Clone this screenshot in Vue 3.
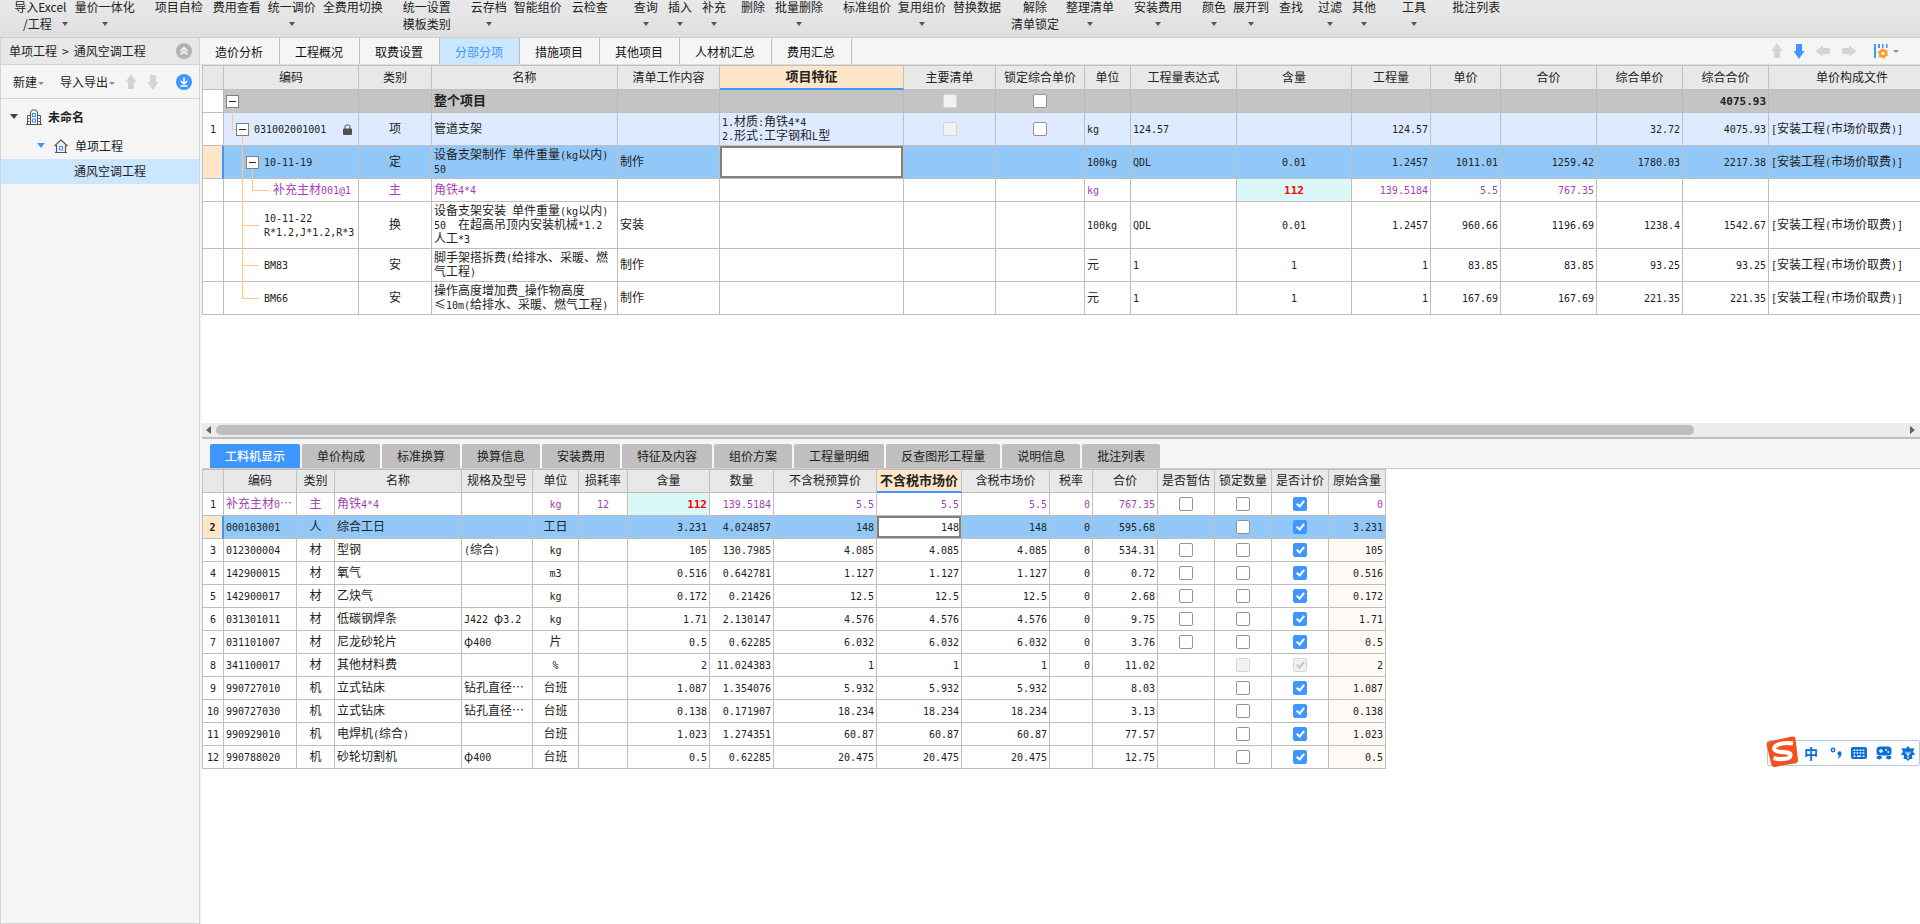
<script setup>
import { ref } from 'vue'

/* Splits a text into runs of ASCII and CJK so each gets its own face. */
const runs = (text) =>
  (String(text ?? '').match(/[\x00-\x5e\x60-\x7f]+|[^\x00-\x5e\x60-\x7f]+/g) || []).map((t) => ({
    t,
    en: /^[\x00-\x5e\x60-\x7f]/.test(t),
  }))

const commands = [
  { t: '导入Excel', sub: '/工程', drop: true, gap: 'md' },
  { t: '量价一体化', drop: true, gap: 'sm' },
  { t: '项目自检', gap: 'xl' },
  { t: '费用查看', gap: 'md' },
  { t: '统一调价', drop: true, gap: 'sm' },
  { t: '全费用切换', gap: 'sm' },
  { t: '统一设置', sub: '模板类别', gap: 'xl' },
  { t: '云存档', drop: true, gap: 'xl' },
  { t: '智能组价', gap: 'sm' },
  { t: '云检查', gap: 'md' },
  { t: '查询', drop: true, gap: 'xxl' },
  { t: '插入', drop: true, gap: 'md' },
  { t: '补充', drop: true, gap: 'md' },
  { t: '删除', gap: 'lg' },
  { t: '批量删除', drop: true, gap: 'md' },
  { t: '标准组价', gap: 'xl' },
  { t: '复用组价', drop: true, gap: 'sm' },
  { t: '替换数据', gap: 'sm' },
  { t: '解除', sub: '清单锁定', gap: 'md' },
  { t: '整理清单', drop: true, gap: 'sm' },
  { t: '安装费用', drop: true, gap: 'xl' },
  { t: '颜色', drop: true, gap: 'xl' },
  { t: '展开到', drop: true, gap: 'sm' },
  { t: '查找', gap: 'md' },
  { t: '过滤', drop: true, gap: 'lg' },
  { t: '其他', drop: true, gap: 'md' },
  { t: '工具', drop: true, gap: 'xxl' },
  { t: '批注列表', gap: 'xxl' },
]

const mainTabs = ['造价分析', '工程概况', '取费设置', '分部分项', '措施项目', '其他项目', '人材机汇总', '费用汇总']
const mainTab = ref('分部分项')
const detailTabs = ['工料机显示', '单价构成', '标准换算', '换算信息', '安装费用', '特征及内容', '组价方案', '工程量明细', '反查图形工程量', '说明信息', '批注列表']
const detailTab = ref('工料机显示')

const billCols = [
  { k: 'no', t: '', w: 21, a: 'c' },
  { k: 'code', t: '编码', w: 135, a: 'l' },
  { k: 'kind', t: '类别', w: 73, a: 'c' },
  { k: 'name', t: '名称', w: 186, a: 'l' },
  { k: 'work', t: '清单工作内容', w: 102, a: 'l' },
  { k: 'feat', t: '项目特征', w: 184, a: 'l' },
  { k: 'main', t: '主要清单', w: 92, a: 'c' },
  { k: 'lock', t: '锁定综合单价', w: 89, a: 'c' },
  { k: 'unit', t: '单位', w: 46, a: 'l' },
  { k: 'expr', t: '工程量表达式', w: 106, a: 'l' },
  { k: 'cont', t: '含量', w: 115, a: 'c' },
  { k: 'qty', t: '工程量', w: 79, a: 'r' },
  { k: 'price', t: '单价', w: 70, a: 'r' },
  { k: 'sum', t: '合价', w: 96, a: 'r' },
  { k: 'cprice', t: '综合单价', w: 86, a: 'r' },
  { k: 'csum', t: '综合合价', w: 86, a: 'r' },
  { k: 'file', t: '单价构成文件', w: 167, a: 'l' },
]
const fee = '[安装工程(市场价取费)]'
const billRows = [
  { cls: 'total', size: 'h1', box: 0, guides: ['v l0 low'], name: '整个项目', main: 'off', lock: 'on', csum: '4075.93' },
  { cls: 'item', size: 'h2', box: 1, guides: ['v l0 up', 'h l0', 'v l1 low'], no: '1', code: '031002001001', locked: true, kind: '项', name: '管道支架', feat: '1.材质:角铁4*4\n2.形式:工字钢和L型', main: 'off', lock: 'on', unit: 'kg', expr: '124.57', qty: '124.57', cprice: '32.72', csum: '4075.93', file: fee },
  { cls: 'current', size: 'h2', box: 2, guides: ['v l1 all', 'h l1', 'v l2 low'], code: '10-11-19', kind: '定', name: '设备支架制作 单件重量(kg以内)\n50', work: '制作', unit: '100kg', expr: 'QDL', cont: '0.01', qty: '1.2457', price: '1011.01', sum: '1259.42', cprice: '1780.03', csum: '2217.38', file: fee },
  { cls: 'extra', size: 'h1', leaf: 'deep', guides: ['v l1 all', 'v l2 up', 'h l2'], code: '补充主材001@1', kind: '主', name: '角铁4*4', unit: 'kg', cont: '112', qty: '139.5184', price: '5.5', sum: '767.35' },
  { cls: '', size: 'h3', leaf: 'leaf', guides: ['v l1 all', 'h l1'], code: '10-11-22\nR*1.2,J*1.2,R*3', kind: '换', name: '设备支架安装 单件重量(kg以内)\n50  在超高吊顶内安装机械*1.2\n人工*3', work: '安装', unit: '100kg', expr: 'QDL', cont: '0.01', qty: '1.2457', price: '960.66', sum: '1196.69', cprice: '1238.4', csum: '1542.67', file: fee },
  { cls: '', size: 'h2', leaf: 'leaf', guides: ['v l1 all', 'h l1'], code: 'BM83', kind: '安', name: '脚手架搭拆费(给排水、采暖、燃\n气工程)', work: '制作', unit: '元', expr: '1', cont: '1', qty: '1', price: '83.85', sum: '83.85', cprice: '93.25', csum: '93.25', file: fee },
  { cls: '', size: 'h2', leaf: 'leaf', guides: ['v l1 up', 'h l1'], code: 'BM66', kind: '安', name: '操作高度增加费_操作物高度\n≤10m(给排水、采暖、燃气工程)', work: '制作', unit: '元', expr: '1', cont: '1', qty: '1', price: '167.69', sum: '167.69', cprice: '221.35', csum: '221.35', file: fee },
]

const resCols = [
  { k: 'no', t: '', w: 21, a: 'c' },
  { k: 'code', t: '编码', w: 73, a: 'l' },
  { k: 'kind', t: '类别', w: 38, a: 'c' },
  { k: 'name', t: '名称', w: 127, a: 'l' },
  { k: 'spec', t: '规格及型号', w: 71, a: 'l' },
  { k: 'unit', t: '单位', w: 46, a: 'c' },
  { k: 'loss', t: '损耗率', w: 49, a: 'c' },
  { k: 'cont', t: '含量', w: 82, a: 'r' },
  { k: 'qty', t: '数量', w: 64, a: 'r' },
  { k: 'p1', t: '不含税预算价', w: 103, a: 'r' },
  { k: 'p2', t: '不含税市场价', w: 85, a: 'r' },
  { k: 'p3', t: '含税市场价', w: 88, a: 'r' },
  { k: 'tax', t: '税率', w: 43, a: 'r' },
  { k: 'sum', t: '合价', w: 65, a: 'r' },
  { k: 'est', t: '是否暂估', w: 57, a: 'c' },
  { k: 'lock', t: '锁定数量', w: 57, a: 'c' },
  { k: 'calc', t: '是否计价', w: 57, a: 'c' },
  { k: 'orig', t: '原始含量', w: 57, a: 'r' },
]
const resRows = [
  ['补充主材0…', '主', '角铁4*4', '', 'kg', '12', '112', '139.5184', '5.5', '0', '767.35', 'on', 'on', 'checked', '0'],
  ['000103001', '人', '综合工日', '', '工日', '', '3.231', '4.024857', '148', '0', '595.68', '', 'on', 'checked', '3.231'],
  ['012300004', '材', '型钢', '(综合)', 'kg', '', '105', '130.7985', '4.085', '0', '534.31', 'on', 'on', 'checked', '105'],
  ['142900015', '材', '氧气', '', 'm3', '', '0.516', '0.642781', '1.127', '0', '0.72', 'on', 'on', 'checked', '0.516'],
  ['142900017', '材', '乙炔气', '', 'kg', '', '0.172', '0.21426', '12.5', '0', '2.68', 'on', 'on', 'checked', '0.172'],
  ['031301011', '材', '低碳钢焊条', 'J422 φ3.2', 'kg', '', '1.71', '2.130147', '4.576', '0', '9.75', 'on', 'on', 'checked', '1.71'],
  ['031101007', '材', '尼龙砂轮片', 'φ400', '片', '', '0.5', '0.62285', '6.032', '0', '3.76', 'on', 'on', 'checked', '0.5'],
  ['341100017', '材', '其他材料费', '', '%', '', '2', '11.024383', '1', '0', '11.02', '', 'off', 'checked off', '2'],
  ['990727010', '机', '立式钻床', '钻孔直径…', '台班', '', '1.087', '1.354076', '5.932', '', '8.03', '', 'on', 'checked', '1.087'],
  ['990727030', '机', '立式钻床', '钻孔直径…', '台班', '', '0.138', '0.171907', '18.234', '', '3.13', '', 'on', 'checked', '0.138'],
  ['990929010', '机', '电焊机(综合)', '', '台班', '', '1.023', '1.274351', '60.87', '', '77.57', '', 'on', 'checked', '1.023'],
  ['990788020', '机', '砂轮切割机', 'φ400', '台班', '', '0.5', '0.62285', '20.475', '', '12.75', '', 'on', 'checked', '0.5'],
].map(([code, kind, name, spec, unit, loss, cont, qty, p, tax, sum, est, lock, calc, orig], i) => ({
  no: String(i + 1), code, kind, name, spec, unit, loss, cont, qty, p1: p, p2: p, p3: p, tax, sum, est, lock, calc, orig,
  cls: i === 0 ? 'extra' : i === 1 ? 'current' : '',
}))
const totalW = (cols) => cols.reduce((s, c) => s + c.w, 1) + 'px'
</script>

<template>
  <div class="app" lang="zh-CN">
    <header class="ribbon">
      <button v-for="c in commands" :key="c.t" type="button" class="cmd" :class="c.gap">
        <span class="cmd-line">{{ c.t }}</span>
        <span class="cmd-line" :class="{ both: c.sub && c.drop }"><template v-if="c.sub">{{ c.sub }}</template><i v-if="c.drop" class="caret"></i></span>
      </button>
    </header>

    <div class="body">
      <aside class="side">
        <div class="side-head">
          <span class="crumb"><span>单项工程</span><span>&gt;</span><span>通风空调工程</span></span>
          <button type="button" class="round" aria-label="收起">
            <svg width="16" height="16" viewBox="0 0 16 16"><circle cx="8" cy="8" r="8" fill="#b3b3b3" /><path d="M4.5 8 8 4.8 11.5 8M4.5 11.6 8 8.4l3.5 3.2" fill="none" stroke="#fff" stroke-width="1.6" /></svg>
          </button>
        </div>
        <div class="side-tools">
          <button type="button" class="tool">新建<i class="caret tiny"></i></button>
          <button type="button" class="tool import">导入导出<i class="caret tiny"></i></button>
          <button type="button" class="arrow" aria-label="上移"><svg width="12" height="16" viewBox="0 0 12 16"><path d="M6 0 11.5 8H9v7H3V8H.5z" fill="#d4d4d4" /></svg></button>
          <button type="button" class="arrow" aria-label="下移"><svg width="12" height="16" viewBox="0 0 12 16"><path d="M6 16 .5 8H3V1h6v7h2.5z" fill="#d4d4d4" /></svg></button>
          <button type="button" class="round" aria-label="定位">
            <svg width="16" height="16" viewBox="0 0 16 16"><circle cx="8" cy="8" r="8" fill="#4096ff" /><path d="M8 3.5v6M4.8 7 8 10l3.2-3M4.5 12h7" fill="none" stroke="#fff" stroke-width="1.5" /></svg>
          </button>
        </div>
        <nav class="tree">
          <div class="node root">
            <i class="caret big"></i>
            <svg width="16" height="16" viewBox="0 0 16 16" fill="none"><path d="M0 15.500h16M1.500 15V6.500H4M14.500 15V6.500H12M4.500 15V3L6 1h4l1.500 2V15M2 9.500h1.500M2 12.500h1.500M12.500 9.500H14M12.500 12.500H14" stroke="#555" /><path d="M6.500 4.500h3v3h-3zM6.500 10h3v3h-3z" stroke="#4096ff" stroke-width="1.200" /></svg>
            <strong>未命名</strong>
          </div>
          <div class="node child">
            <i class="caret big blue"></i>
            <svg width="14" height="14" viewBox="0 0 14 14" fill="none"><path d="M.5 7 7 1l6.500 6M2.500 6v7.500h9V6M1 13.500h12" stroke="#555" stroke-width="1.200" /><path d="M5.500 7.500h3v3.500h-3z" stroke="#4096ff" stroke-width="1.200" /></svg>
            <span>单项工程</span>
          </div>
          <div class="node grand">通风空调工程</div>
        </nav>
      </aside>

      <main class="main">
        <div class="tabs">
          <button v-for="t in mainTabs" :key="t" type="button" class="tab" :class="{ active: t === mainTab }" @click="mainTab = t">{{ t }}</button>
          <div class="tab-tools">
            <button type="button" aria-label="上移"><svg width="12" height="16" viewBox="0 0 12 16"><path d="M6 0 11.500 8H9v7H3V8H.5z" fill="#d4d4d4" /></svg></button>
            <button type="button" aria-label="下移"><svg width="12" height="16" viewBox="0 0 12 16"><path d="M6 16 .5 8H3V1h6v7h2.500z" fill="#4096ff" /></svg></button>
            <button type="button" aria-label="左移"><svg width="16" height="12" viewBox="0 0 16 12"><path d="M0 6 8 .5V3h7v6H8v2.500z" fill="#d4d4d4" /></svg></button>
            <button type="button" aria-label="右移"><svg width="16" height="12" viewBox="0 0 16 12"><path d="M16 6 8 .5V3H1v6h7v2.500z" fill="#d4d4d4" /></svg></button>
            <button type="button" class="setup" aria-label="列设置">
              <svg width="16" height="16" viewBox="0 0 16 16"><path d="M1 1h2v14H1zM5 1h2v4H5zM9 1h1.500v4H9zM13 1h1.500v4H13z" fill="#4096ff" /><circle cx="10" cy="10.500" r="3" fill="none" stroke="#ff9a1f" stroke-width="2.400" /><circle cx="10" cy="10.500" r="4.300" fill="none" stroke="#ff9a1f" stroke-width="1.500" stroke-dasharray="2.200 2.300" /></svg>
              <i class="caret tiny"></i>
            </button>
          </div>
        </div>

        <section class="bill">
          <div class="bill-grid">
            <table class="grid" :style="{ width: totalW(billCols) }">
              <colgroup><col v-for="c in billCols" :key="c.k" :style="{ width: c.w + 'px' }"></colgroup>
              <thead>
                <tr class="h0"><th v-for="c in billCols" :key="c.k" scope="col" :class="{ focus: c.k === 'feat' }">{{ c.t }}</th></tr>
              </thead>
              <tbody>
                <tr v-for="(r, i) in billRows" :key="i" :class="[r.cls, r.size]">
                  <td v-for="c in billCols" :key="c.k" :class="[c.a, 'k-' + c.k]">
                    <template v-if="c.k === 'code'">
                      <i v-for="g in r.guides" :key="g" class="guide" :class="g"></i>
                      <div class="code" :class="r.leaf">
                        <button v-if="r.box !== undefined" type="button" class="fold" :class="'f' + r.box" aria-label="折叠"></button>
                        <span class="txt"><span v-for="(x, n) in runs(r.code)" :key="n" :class="{ en: x.en }">{{ x.t }}</span></span>
                        <svg v-if="r.locked" class="padlock" width="9" height="11" viewBox="0 0 9 11"><path d="M2 5V3.200a2.500 2.300 0 0 1 5 0V5" fill="none" stroke="#888" stroke-width="1.400" /><rect y="4.500" width="9" height="6.500" rx="1" fill="#505050" /></svg>
                      </div>
                    </template>
                    <input v-else-if="(c.k === 'main' || c.k === 'lock') && r[c.k]" type="checkbox" class="check" :disabled="r[c.k] === 'off'" :aria-label="c.t">
                    <span v-else class="txt"><span v-for="(x, n) in runs(r[c.k])" :key="n" :class="{ en: x.en }">{{ x.t }}</span></span>
                  </td>
                </tr>
              </tbody>
            </table>
          </div>
          <div class="scroll">
            <i class="left"></i>
            <div class="track"><div class="thumb"></div></div>
            <i class="right"></i>
          </div>
        </section>

        <section class="detail">
          <div class="dtabs">
            <button v-for="t in detailTabs" :key="t" type="button" class="dtab" :class="{ active: t === detailTab }" @click="detailTab = t">{{ t }}</button>
          </div>
          <div class="res-grid">
            <table class="grid res" :style="{ width: totalW(resCols) }">
              <colgroup><col v-for="c in resCols" :key="c.k" :style="{ width: c.w + 'px' }"></colgroup>
              <thead>
                <tr class="h1"><th v-for="c in resCols" :key="c.k" scope="col" :class="{ focus: c.k === 'p2' }">{{ c.t }}</th></tr>
              </thead>
              <tbody>
                <tr v-for="r in resRows" :key="r.no" :class="[r.cls, 'h1']">
                  <td v-for="c in resCols" :key="c.k" :class="[c.a, 'k-' + c.k]">
                    <template v-if="c.k === 'est' || c.k === 'lock' || c.k === 'calc'">
                      <input v-if="r[c.k]" type="checkbox" class="check" :checked="r[c.k].includes('checked')" :disabled="r[c.k].includes('off')" :aria-label="c.t + ' ' + r.no">
                    </template>
                    <span v-else class="txt"><span v-for="(x, n) in runs(r[c.k])" :key="n" :class="{ en: x.en }">{{ x.t }}</span></span>
                  </td>
                </tr>
              </tbody>
            </table>
          </div>
        </section>
      </main>
    </div>

    <div class="ime">
      <svg class="ime-logo" width="32" height="32" viewBox="0 0 32 32"><path d="M3 5.500 26 .6q3-.5 3.500 2L32 24q.3 2.800-2.500 3.300L9 30.900q-3 .4-3.600-2.200L.6 9Q.2 6.200 3 5.500z" fill="#f4511e" /><path d="M27 7.500C18 6 6.500 8.500 8.500 13.500c1.800 4.200 16.500 1 16 5.700C24 24 12 23.500 7.500 22" fill="none" stroke="#fff" stroke-width="4.200" /></svg>
      <span class="ime-zh">中</span>
      <svg width="12" height="14" viewBox="0 0 12 14"><circle cx="3" cy="4" r="1.700" fill="none" stroke="#0a6fd6" stroke-width="1.500" /><path d="M7.500 7.500a2 2 0 1 1 3.800.6c0 2.300-1.300 3.900-3.300 4.400l-.4-.9c1-.4 1.600-1.100 1.700-2-1 0-1.800-.9-1.800-2.100z" fill="#0a6fd6" /></svg>
      <svg width="16" height="14" viewBox="0 0 16 14"><rect y="1" width="16" height="12" rx="2" fill="#0a6fd6" /><path d="M2.500 4.200h11M2.500 7h11" stroke="#fff" stroke-width="1.600" stroke-dasharray="1.800 1.200" /><path d="M2.500 10.200h2M6 10.200h4M11.500 10.200h2" stroke="#fff" stroke-width="1.600" /></svg>
      <svg width="16" height="14" viewBox="0 0 16 14"><rect x=".5" y=".5" width="15" height="9" rx="3.500" fill="#0a6fd6" /><path d="M5 3v4M3 5h4" stroke="#fff" stroke-width="1.300" /><circle cx="10" cy="4" r=".9" fill="#fff" /><circle cx="12.300" cy="6" r=".9" fill="#fff" /><ellipse cx="3.300" cy="11.600" rx="2.800" ry="1.800" fill="#0a6fd6" /><ellipse cx="12.700" cy="11.600" rx="2.800" ry="1.800" fill="#0a6fd6" /></svg>
      <svg width="14" height="15" viewBox="0 0 14 15"><path d="m7 0 2 2.500 4.500-.3-1.500 3.600 2 2.600-3 1.200.3 3.400H9L7 15l-2-2H2.700L3 9.600 0 8.400l2-2.600L.5 2.200 5 2.500z" fill="#0a6fd6" /><path d="M7 6v7M4.800 5.500C4.800 8 6 8.500 7 8.500s2.200-.5 2.200-3" fill="none" stroke="#fff" /></svg>
    </div>
  </div>
</template>

<style>
body { margin: 0; overflow: hidden; }
</style>

<style scoped>
.app {
  position: relative;
  display: flex;
  flex-direction: column;
  height: 100vh;
  overflow: hidden;
  background: #f5f5f5;
  color: #222;
  font: 12px/16px "Noto Sans CJK SC", sans-serif;
}
button {
  margin: 0;
  padding: 0;
  border: 0;
  background: none;
  color: inherit;
  font: inherit;
  white-space: nowrap;
}
svg { display: block; flex: none; }
.caret {
  display: inline-block;
  border: 3px solid transparent;
  border-top: 4px solid #555;
  border-bottom: 0;
  vertical-align: middle;
}
.caret.tiny { border-width: 3px 3px 0; border-top-color: #888; }
.caret.big { border-width: 5px 4px 0; border-top-color: #444; }
.caret.blue { border-top-color: #4096ff; }

.ribbon {
  display: flex;
  flex: none;
  align-items: flex-start;
  height: 37px;
  padding-left: 3px;
  border-bottom: 1px solid #cfcfcf;
  background: linear-gradient(#e9e9e9, #dfdfdf);
}
.cmd { display: flex; flex-direction: column; align-items: center; flex: none; }
.cmd-line { display: flex; align-items: center; gap: 10px; height: 15px; line-height: 14px; }
.cmd-line:first-child { height: 14px; padding-bottom: 2px; }
.both { padding-left: 10px; }
.sm { margin-left: 7px; }
.md { margin-left: 10px; }
.lg { margin-left: 15px; }
.xl { margin-left: 20px; }
.xxl { margin-left: 26px; }

.body { display: flex; flex: 1; min-height: 0; }
.side {
  display: flex;
  flex-direction: column;
  flex: none;
  box-sizing: border-box;
  width: 200px;
  border: 1px solid #d4d4d4;
  border-top: 0;
}
.side-head {
  display: flex;
  align-items: center;
  justify-content: space-between;
  height: 26px;
  padding: 0 7px 0 8px;
  border-bottom: 1px solid #d4d4d4;
  background: #e8e8e8;
}
.crumb { display: flex; gap: 5px; }
.side-tools {
  display: flex;
  align-items: center;
  height: 33px;
  padding: 0 7px 0 12px;
  border-bottom: 1px solid #d4d4d4;
}
.tool .caret { margin-left: 1px; }
.import { margin-left: 16px; }
.arrow { margin-left: 10px; }
.side-tools .round { margin-left: auto; }
.tree { padding-top: 2px; }
.node { display: flex; align-items: center; box-sizing: border-box; height: 25px; padding-bottom: 2px; }
.root { height: 33px; padding-left: 9px; }
.root svg { margin: 0 6px 0 8px; }
.child { padding-left: 36px; }
.child svg { margin: 0 7px 0 9px; }
.grand { padding-left: 73px; background: #cae7ff; }

.main { display: flex; flex: 1; flex-direction: column; min-width: 0; }
.tabs { display: flex; flex: none; height: 26px; border-bottom: 1px solid #ddd; color: #111; }
.tab { padding: 2px 16px 0 15px; border-right: 1px solid #bfbfbf; }
.tab.active { background: #cae7ff; color: #4096ff; }
.tab-tools { display: flex; align-items: center; gap: 10px; margin-left: auto; padding-right: 21px; }
.setup { display: flex; align-items: center; gap: 4px; margin-left: 6px; }

.bill {
  display: flex;
  flex: 372 1 0;
  flex-direction: column;
  min-height: 0;
  margin-left: 2px;
  border-bottom: 2px solid #bfbfbf;
}
.bill-grid { flex: 1; min-height: 0; overflow: hidden; background: #fff; }
.scroll { display: flex; align-items: center; gap: 5px; height: 14px; padding: 0 5px 0 4px; background: #ebebeb; }
.track { flex: 1; }
.thumb { width: 87.5%; height: 10px; border-radius: 5px; background: #bdbdbd; }
.left { border: 4px solid transparent; border-right: 5px solid #606060; border-left: 0; }
.right { border: 4px solid transparent; border-left: 5px solid #606060; border-right: 0; }

.detail { display: flex; flex: 485 1 0; flex-direction: column; min-height: 0; margin-left: 2px; }
.dtabs { display: flex; flex: none; gap: 2px; padding: 5px 8px 0; border-bottom: 1px solid #ccc; }
.dtab { height: 24px; padding: 0 15px; border-radius: 2px 2px 0 0; background: #bfbfbf; }
.dtab.active { background: #4096ff; color: #fff; font-weight: 500; }
.res-grid { flex: 1; min-height: 0; overflow: hidden; background: #fff; }

.grid {
  table-layout: fixed;
  border-spacing: 0;
  border-top: 1px solid #bfbfbf;
  border-left: 1px solid #bfbfbf;
  line-height: 14px;
}
th, td {
  box-sizing: border-box;
  padding: 0 2px;
  border-right: 1px solid #bfbfbf;
  border-bottom: 1px solid #bfbfbf;
  overflow: hidden;
  vertical-align: middle;
}
th { padding: 0 0 2px; background: #e8e8e8; font-weight: 400; white-space: nowrap; }
th.focus { border-bottom: 2px solid #4096ff; background: #ffe6c9; font-size: 13px; font-weight: 700; }
.h0 { height: 24px; }
.h1 { height: 23px; }
.h2 { height: 33px; }
.h3 { height: 47px; }
.c { text-align: center; }
.l { text-align: left; }
.r { text-align: right; }
.txt { display: block; padding-bottom: 2px; white-space: pre; }
.en { font-family: "DejaVu Sans Mono", monospace; font-size: 10px; line-height: 0; }

.total td { border-right-color: #bababa; background: #c4c4c4; font-size: 13px; font-weight: 700; }
.item td { background: #deeaff; }
.current td { background: #91c8f7; }
.extra td { color: #a23fb5; }
tr .k-no.k-no { background: #fff; color: #222; }
tr.current .k-no.k-no { border-right: 2px solid #4096ff; background: #ffe6c9; font-weight: 700; }
.extra .k-cont.k-cont { background: #daf8f8; color: #f00; font-weight: 700; }
.total .en, .extra .k-cont .en { font-size: 11px; }
.current .k-feat, .current .k-p2 { background: #fff; box-shadow: inset 0 0 0 2px #808080; }
.res tr:not(.current):not(.extra) .k-orig { background: #fffaf5; }

.k-code { position: relative; overflow: visible; }
.res .k-code { overflow: hidden; }
.code { display: flex; align-items: center; }
.code.leaf { padding-left: 38px; }
.code.deep { padding-left: 47px; }
.fold {
  position: relative;
  flex: none;
  width: 13px;
  height: 13px;
  margin-right: 5px;
  border: 1px solid #808080;
  background: linear-gradient(#222, #222) center / 7px 1px no-repeat #fff;
}
.f1 { margin-left: 10px; }
.f2 { margin-left: 20px; }
.guide { position: absolute; background: #ffc97d; }
.guide.v { top: 0; bottom: -1px; width: 1px; }
.guide.up { bottom: 50%; }
.guide.low { top: 50%; }
.guide.h { top: 50%; width: 17px; height: 1px; }
.l0 { left: 8px; }
.l1 { left: 18px; }
.l2 { left: 28px; }
.padlock { margin: 0 4px 0 auto; }

.check {
  display: block;
  position: relative;
  box-sizing: border-box;
  width: 14px;
  height: 14px;
  margin: 0 auto;
  appearance: none;
  border: 1px solid #949494;
  border-radius: 2px;
  background: #fff;
}
.check:checked { border-color: #4096ff; background: #4096ff; }
.check:disabled { border-color: #d6d6d6; background: #f2f2f2; }
.check:checked::after {
  content: "";
  position: absolute;
  left: 4px;
  top: 1px;
  width: 3px;
  height: 6px;
  border: solid #fff;
  border-width: 0 2px 2px 0;
  transform: rotate(40deg);
}
.check:disabled::after { border-color: #c4c4c4; }

.ime {
  position: absolute;
  top: 740px;
  right: 0;
  display: flex;
  align-items: center;
  gap: 9px;
  box-sizing: border-box;
  height: 26px;
  padding: 0 4px 0 36px;
  border: 1px solid #b5cbe4;
  border-radius: 2px;
  background: #fff;
}
.ime-logo { position: absolute; left: -2px; top: -5px; }
.ime-zh { margin-right: 3px; color: #0a6fd6; font-size: 14px; font-weight: 700; }
</style>
